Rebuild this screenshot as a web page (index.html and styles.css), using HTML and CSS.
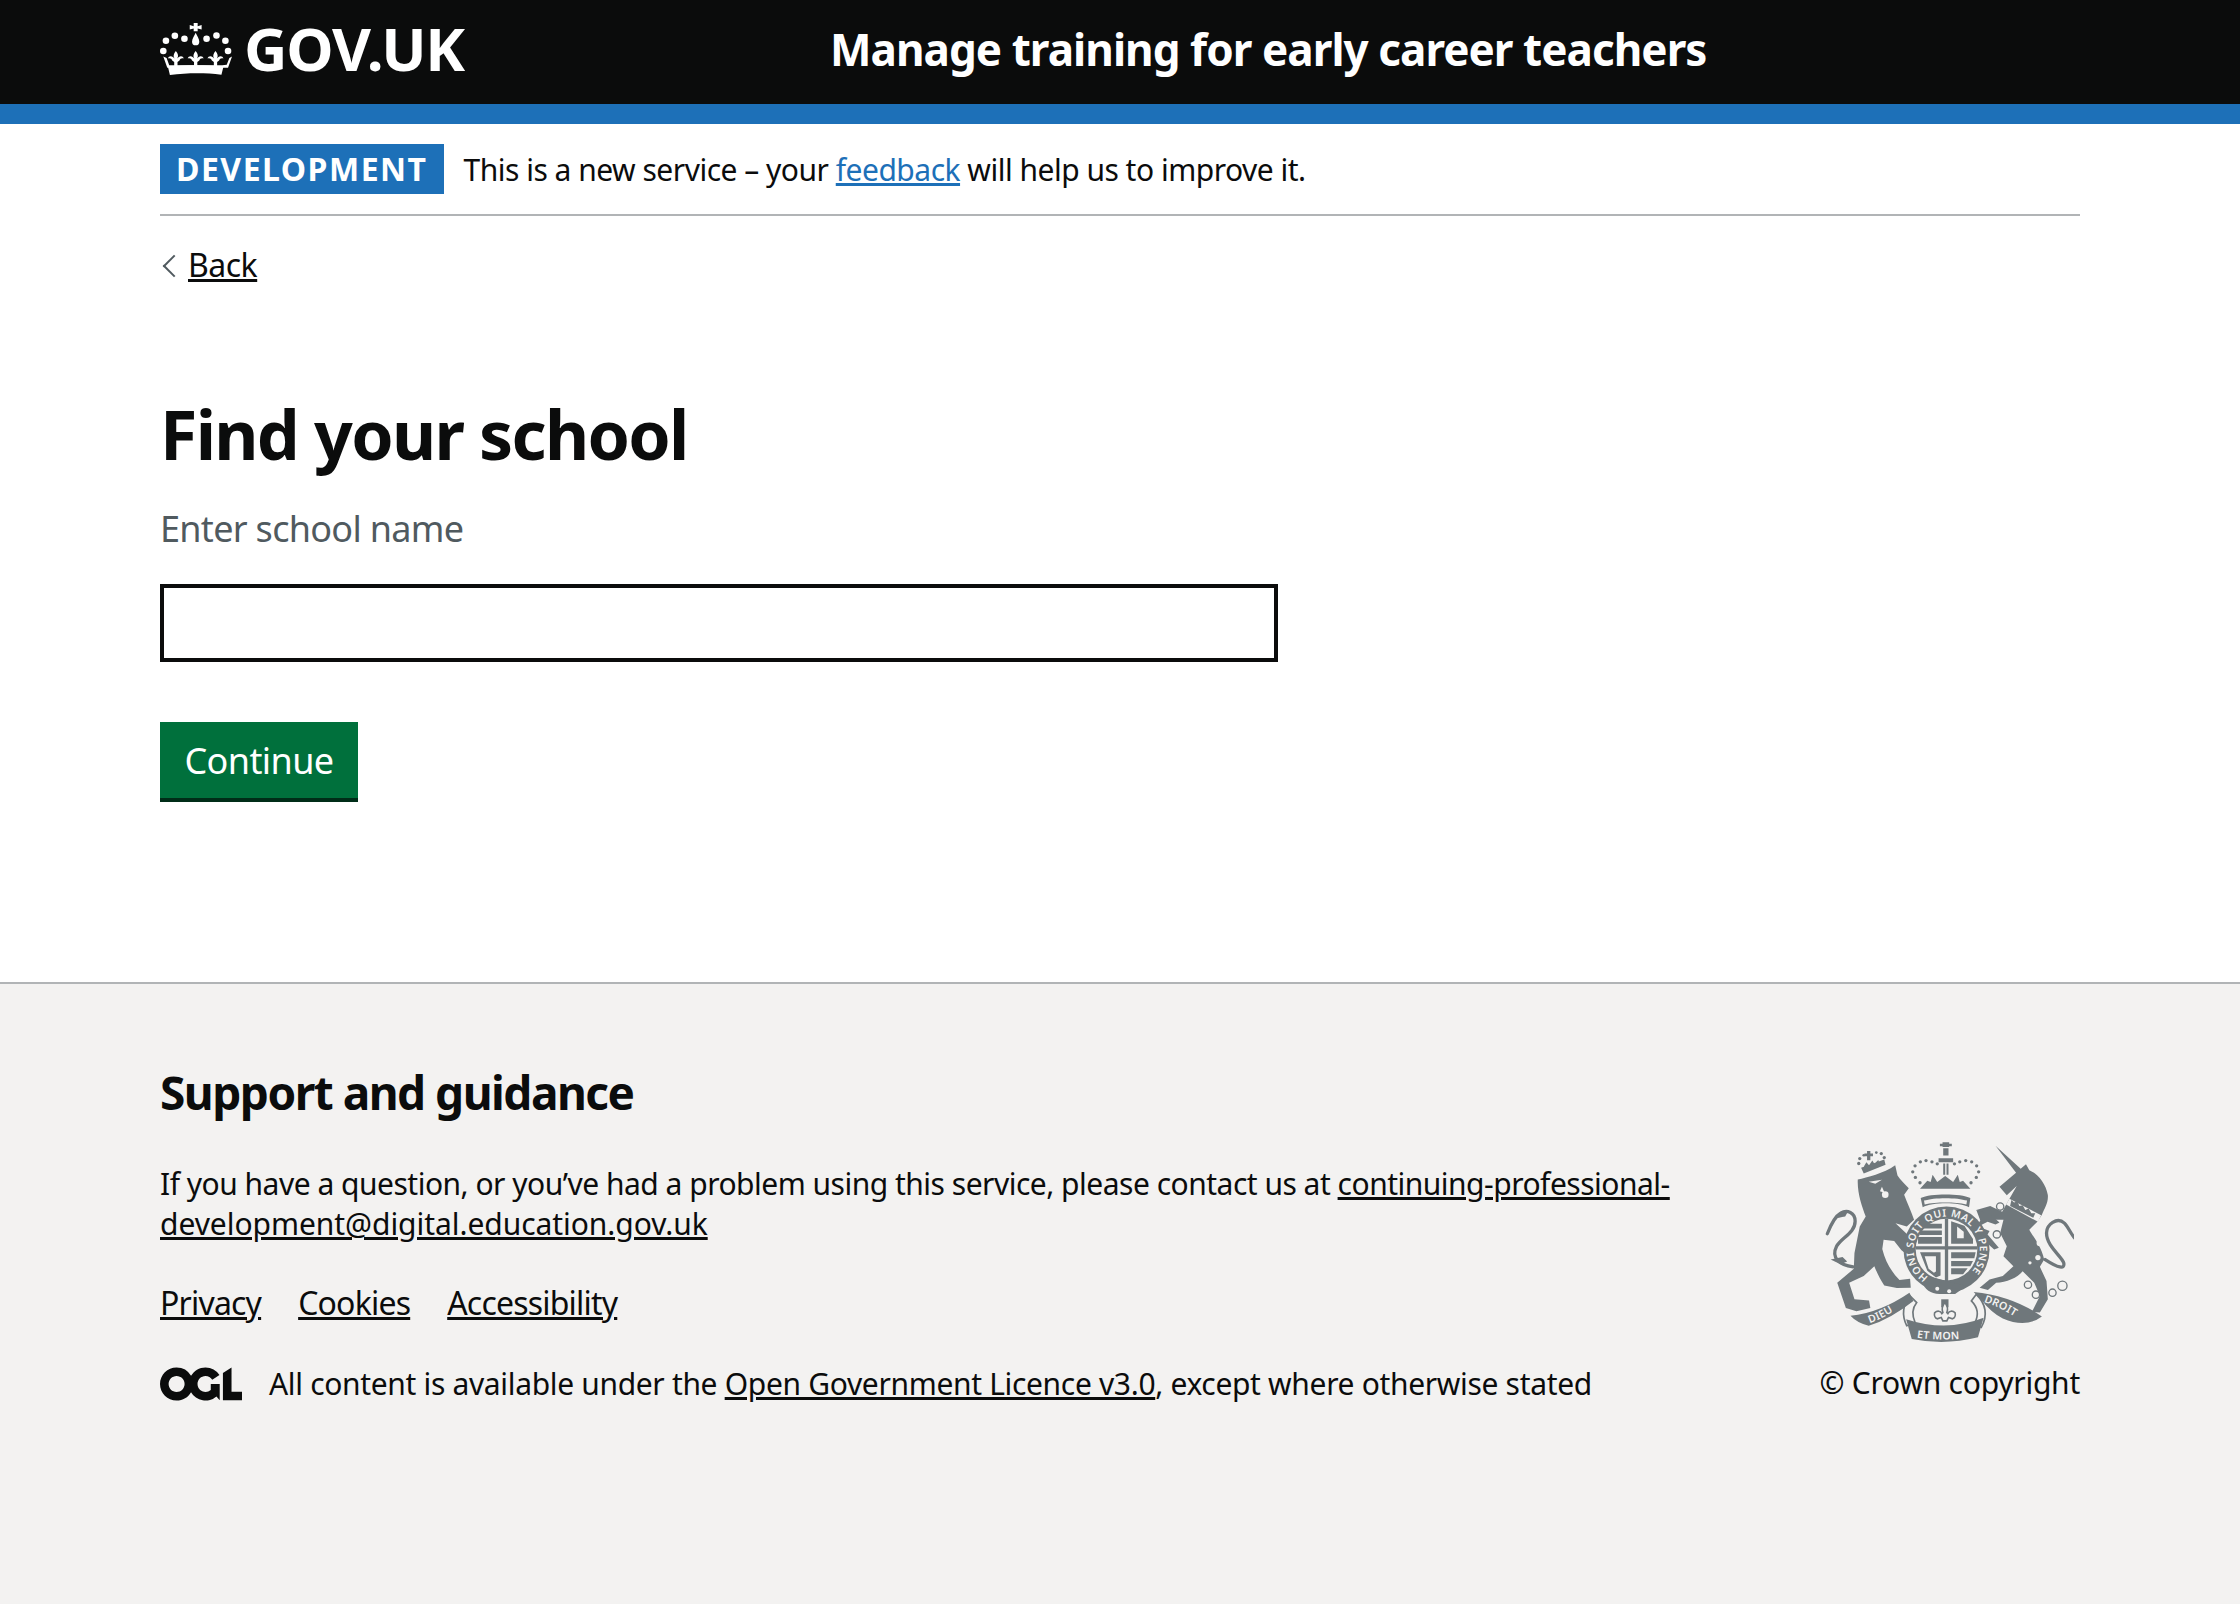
FILE: index.html
```html
<!DOCTYPE html>
<html lang="en">
<head>
<meta charset="utf-8">
<title>Find your school</title>
<link rel="stylesheet" href="styles.css">
</head>
<body>
<header class="site-header">
  <div class="container header-row">
    <a class="logo" href="#">
      <svg class="crown" viewBox="60 68 218 162" aria-hidden="true">
        <defs>
          <path id="fleur" d="M0-26c7 9 9 15 4 23l4-4c7-5 14-3 16 4-6-2-11 0-13 6l-6 4v16H-5V7l-6-4c-2-6-7-8-13-6 2-7 9-9 16-4l4 4C-9-11-7-17 0-26z"/>
        </defs>
        <circle cx="70" cy="155" r="10"/><circle cx="78" cy="124" r="10"/><circle cx="105" cy="109" r="10"/><circle cx="134" cy="118" r="10"/><circle cx="201" cy="118" r="10"/><circle cx="231" cy="108" r="10"/><circle cx="258" cy="124" r="10"/><circle cx="266" cy="155" r="10"/>
        <path d="M162 70h12v10l12-4v14l-12-3v8h-12v-8l-12 3V76l12 4zM168 100c4 10 11 18 11 27a11 11 0 0 1-22 0c0-9 7-17 11-27z"/>
        <use href="#fleur" x="108" y="181"/><use href="#fleur" x="168" y="181"/><use href="#fleur" x="228" y="181"/>
        <path d="M70 172l10 4 8 22 160 0 14-1 8-21 8-4-12 34H82z"/>
        <path d="M84 203c50-6 118-6 168 0l-6 24c-50-6-102-6-156 1z"/>
      </svg>
      <span class="logo-text">GOV.UK</span>
    </a>
    <a class="service-name" href="#">Manage training for early career teachers</a>
  </div>
</header>

<div class="container">
  <div class="phase-banner">
    <strong class="phase-tag">DEVELOPMENT</strong>
    <span class="phase-text">This is a new service – your <a class="blue-link" href="#">feedback</a> will help us to improve it.</span>
  </div>
  <a class="back-link" href="#">Back</a>
  <main class="main">
    <h1 class="title">Find your school</h1>
    <label class="hint" for="school">Enter school name</label>
    <input class="text-input" id="school" type="text">
    <button class="button" type="button">Continue</button>
  </main>
</div>

<footer class="site-footer">
  <div class="container footer-row">
    <div class="footer-main">
      <h2 class="footer-title">Support and guidance</h2>
      <p class="footer-para">If you have a question, or you’ve had a problem using this service, please contact us at <a href="#">continuing-professional-<br><span class="email-end">development@digital.education.gov.uk</span></a></p>
      <ul class="footer-links">
        <li><a href="#">Privacy</a></li>
        <li><a href="#">Cookies</a></li>
        <li><a href="#">Accessibility</a></li>
      </ul>
      <div class="licence">
        <svg class="ogl" viewBox="0 0 483.2 195.7" aria-hidden="true"><path d="M421.5 142.8V.1l-50.7 32.3v161.1h112.4v-50.7zm-122.3-9.6A47.12 47.12 0 0 1 221 97.8c0-26 21.1-47.1 47.1-47.1 16.7 0 31.4 8.7 39.7 21.8l42.7-27.2A97.63 97.63 0 0 0 268.1 0c-36.5 0-68.3 20.1-85.1 49.7A98 98 0 0 0 97.8 0C43.9 0 0 43.9 0 97.8s43.9 97.8 97.8 97.8c36.5 0 68.3-20.1 85.1-49.7a97.76 97.76 0 0 0 149.6 25.4l19.4 22.2V97.8h-52.7l-.01 35.4zM97.8 145c-26 0-47.1-21.1-47.1-47.1s21.1-47.1 47.1-47.1 47.2 21 47.2 47S123.8 145 97.8 145"/></svg>
        <span>All content is available under the <a href="#">Open Government Licence v3.0</a>, except where otherwise stated</span>
      </div>
    </div>
    <div class="footer-crest">
      <svg class="arms" viewBox="70 65 755 610" aria-hidden="true">
        <defs>
          <path id="garter" d="M385 473A100 100 0 1 1 510 462"/>
          <path id="rib-left" d="M208 612Q265 592 322 546"/>
          <path id="rib-mid" d="M350 656Q435 668 525 654"/>
          <path id="rib-right" d="M552 548Q620 570 672 612"/>
        </defs>
        <!-- lion -->
        <path class="arm-line" d="M158 442c-40-6-68-26-50-62 14-26 56-40 56-76 0-26-24-36-44-24-18 10-30 36-40 62"/>
        <path class="arm-fill" d="M100 296c12-16 28-24 44-24l-10 18c-12 2-26 6-34 6zM90 420l30 14 20-8-14-14z"/>
        <path class="arm-fill" d="M172 178C200 172 250 160 285 135L292 166C300 180 315 192 326 205L312 224C322 250 334 275 342 300L320 320 286 310 330 352 352 398 330 412 304 392 282 364 250 360 246 388C255 425 272 455 298 482L330 478 332 505 290 506 252 498C240 480 230 460 222 440L190 470 146 490 162 540 206 544 210 566 168 576 136 566 110 490 160 448 162 400 178 320 196 290C185 260 170 220 172 178Z"/>
        <circle class="arm-pale" cx="255" cy="224" r="10"/>
        <path class="arm-pale" d="M205 185l40-6-20 12zM245 200l8 18-14-4z"/>
        <!-- lion crown -->
        <path class="arm-fill" d="M182 143L252 118 256 134 190 160ZM190 140l8-14 8 9 10-14 6 10 12-12 4 12 14-4 0 8-56 20zM200 92h10v8h8v8h-8v12h-10v-12h-8v-8h8z"/>
        <g class="arm-fill">
          <circle cx="175" cy="130" r="5"/><circle cx="178" cy="115" r="5"/><circle cx="190" cy="105" r="4"/><circle cx="228" cy="97" r="4"/><circle cx="243" cy="100" r="5"/><circle cx="252" cy="112" r="5"/>
        </g>
        <!-- unicorn -->
        <path class="arm-line" d="M738 420c40 26 60 30 56 10-6-20-52-50-52-90 0-26 32-50 54-30 12 12 20 34 32 46"/>
        <path class="arm-fill" d="M588 76L664 146 680 132 690 150C715 160 740 190 746 225 748 250 735 265 728 285L715 305 690 330C700 350 725 375 735 420L722 442 742 485 746 540 722 580 698 578 722 530 705 490 670 455C655 475 620 488 590 490L565 512 540 505 570 480 610 470 642 440 612 410 622 380 602 340 612 300 580 300 530 270 572 258 608 276 628 240 652 198 622 226 600 200 650 158Z"/>
        <path class="arm-pale" d="M630 236l96 50-10 20-96-52z"/>
        <path class="arm-fill" d="M636 240l8 8 10-4 6 14 10-2 8 14 10-4 8 14 12 0-6 14-70-36z"/>
        <circle class="arm-pale" cx="722" cy="370" r="10"/><circle class="arm-pale" cx="716" cy="414" r="8"/><circle class="arm-pale" cx="692" cy="430" r="5"/>
        <g class="chain">
          <circle cx="602" cy="260" r="11"/><circle cx="592" cy="344" r="11"/><circle cx="686" cy="496" r="11"/><circle cx="710" cy="526" r="11"/><circle cx="760" cy="520" r="11"/><circle cx="790" cy="499" r="14"/>
        </g>
        <path class="arm-fill" d="M530 270l40 12 30 26-12 6-24-8-28 14 34 14-6 10 34 40-14 6-40-36-22-18 20-34z"/>
        <!-- royal crown -->
        <path class="arm-fill" d="M428 66h20v14h-20zM420 70h36v8h-36zM430 84h16v22h-16zM416 114h44v12h-44zM430 130h6v34h-6zM440 130h6v34h-6z"/>
        <path class="arm-fill" d="M360 206l22-24 10 4 6-22 14 22 8-6 16-12 16 12 8 6 14-22 6 22 10-4 22 24z"/>
        <path class="arm-fill" d="M362 234c30-14 120-14 150 0l-4 28c-30-16-110-16-140 0z"/>
        <path class="arm-pale" d="M372 242c30-10 100-10 130 0l-2 12c-34-8-92-8-126 0z"/>
        <g class="arm-fill">
          <circle cx="360" cy="188" r="5"/><circle cx="346" cy="172" r="5"/><circle cx="338" cy="155" r="5"/><circle cx="345" cy="137" r="5"/><circle cx="361" cy="125" r="5"/><circle cx="378" cy="121" r="5"/><circle cx="396" cy="125" r="5"/><circle cx="412" cy="131" r="5"/>
          <circle cx="514" cy="188" r="5"/><circle cx="530" cy="172" r="5"/><circle cx="537" cy="155" r="5"/><circle cx="531" cy="137" r="5"/><circle cx="516" cy="125" r="5"/><circle cx="498" cy="121" r="5"/><circle cx="480" cy="125" r="5"/><circle cx="464" cy="131" r="5"/>
        </g>
        <!-- garter and shield -->
        <circle class="arm-fill" cx="440" cy="390" r="130"/>
        <circle class="arm-pale" cx="440" cy="390" r="93"/>
        <path class="arm-fill" d="M435 297h10v188h-10zM347 380h186v10H347z"/>
        <path class="arm-fill" d="M372 312h54v14h-54zM360 332h66v14h-66zM354 352h72v20h-72zM454 304l40 14 26 40v14h-66zM454 398h74l-4 18h-70zM454 424h66l-8 16h-58zM454 446h50l-14 18h-36zM360 398h62v70l-14 6-26-20z"/>
        <path class="arm-pale" d="M472 320l20 16v20h-20zM374 410h34v46l-6 4-16-12z"/>
        <text class="garter-text"><textPath href="#garter">HONI SOIT QUI MAL Y PENSE</textPath></text>
        <path class="arm-fill" d="M366 488l34-14 100 26-34 24h-48c-26 0-44-14-52-36z"/>
        <circle class="arm-pale" cx="412" cy="508" r="6"/><circle class="arm-pale" cx="448" cy="516" r="6"/>
        <!-- motto -->
        <path class="ribbon-fold" d="M330 530Q296 572 320 620L345 610Q330 575 350 550Z"/>
        <path class="ribbon-fold" d="M530 525Q575 570 545 625L525 612Q545 575 515 545Z"/>
        <path class="arm-fill" d="M150 590Q240 580 328 520L340 545Q270 600 205 620Q170 612 150 590Z"/>
        <path class="arm-fill" d="M318 600Q440 640 552 596L535 655Q435 680 335 660Z"/>
        <path class="arm-fill" d="M522 518Q640 530 728 592Q680 628 610 598Q575 580 548 545Z"/>
        <path class="arm-fill" d="M424 540h22v24h-22z"/>
        <path class="ribbon-fold" d="M435 550c8 10 11 18 6 30l3 3c4-8 14-10 22-2 2 8-2 16-8 18l-12-4-5 10h-12l-5-10-12 4c-6-2-10-10-8-18 8-8 18-6 22 2l3-3c-5-12-2-20 6-30z"/>
        <text class="motto-text"><textPath href="#rib-left">DIEU</textPath></text>
        <text class="motto-text"><textPath href="#rib-mid">ET MON</textPath></text>
        <text class="motto-text"><textPath href="#rib-right">DROIT</textPath></text>
      </svg>
      <span class="copyright">© Crown copyright</span>
    </div>
  </div>
</footer>
</body>
</html>
```
FILE: styles.css
```css
* { box-sizing: border-box; }
html, body { margin: 0; padding: 0; }
body {
  font-family: "Noto Sans", "Liberation Sans", sans-serif;
  color: #0b0c0c;
  background: #fff;
  height: 1604px;
  display: flex;
  flex-direction: column;
}
a { color: inherit; }
.container { margin: 0 160px; }

.site-header {
  background: #0b0c0c;
  height: 124px;
  border-bottom: 20px solid #1d70b8;
  flex: none;
}
.header-row { display: flex; align-items: center; height: 104px; padding-bottom: 6px; }
.logo {
  display: flex;
  align-items: center;
  width: 670px;
  color: #fff;
  text-decoration: none;
}
.crown { width: 72px; height: 54px; fill: #fff; margin-right: 12px; }
.logo-text { font-size: 60px; font-weight: 700; letter-spacing: -1.2px; line-height: 1; margin-top: -2px; }
.service-name {
  color: #fff;
  text-decoration: none;
  font-size: 44px;
  font-weight: 700;
  letter-spacing: -0.95px;
  line-height: 1;
}

.phase-banner {
  display: flex;
  align-items: center;
  gap: 20px;
  padding: 20px 0;
  border-bottom: 2px solid #b1b4b6;
}
.phase-tag {
  background: #1d70b8;
  color: #fff;
  font-size: 32px;
  font-weight: 700;
  letter-spacing: 1.5px;
  line-height: 50px;
  height: 50px;
  padding: 0 16px;
}
.phase-text { font-size: 30px; letter-spacing: -0.5px; line-height: 40px; padding-top: 1px; }
.blue-link { color: #1d70b8; }

.back-link {
  display: inline-block;
  position: relative;
  margin-top: 29px;
  padding-left: 28px;
  font-size: 32px;
  line-height: 40px;
  letter-spacing: -0.5px;
}
.back-link::before {
  content: "";
  position: absolute;
  left: 6px;
  top: 13px;
  width: 14px;
  height: 14px;
  border-left: 2px solid #505a5f;
  border-bottom: 2px solid #505a5f;
  transform: rotate(45deg);
}

.main { padding-top: 109px; display: flex; flex-direction: column; align-items: flex-start; }
.title { margin: 0 0 30px; font-size: 68px; line-height: 80px; font-weight: 700; letter-spacing: -1.7px; }
.hint { color: #505a5f; font-size: 36px; line-height: 50px; letter-spacing: -0.7px; margin-bottom: 30px; }
.text-input {
  display: block;
  width: 1118px;
  height: 78px;
  border: 4px solid #0b0c0c;
  background: #fff;
  border-radius: 0;
  margin: 0 0 60px;
}
.button {
  width: 198px;
  height: 80px;
  padding: 0 0 2px;
  border: 0;
  background: #00703c;
  box-shadow: inset 0 -4px 0 #002d18;
  color: #fff;
  font-family: inherit;
  font-size: 36px;
  letter-spacing: -0.6px;
  line-height: 1;
}

.site-footer {
  flex: 1;
  margin-top: 180px;
  background: #f3f2f1;
  border-top: 2px solid #b1b4b6;
  padding-top: 78px;
}
.footer-row { display: flex; justify-content: space-between; align-items: flex-start; }
.footer-main { width: 1620px; }
.footer-title { margin: 0 0 42px; font-size: 46px; line-height: 60px; font-weight: 700; letter-spacing: -1.5px; }
.footer-para { margin: 0 0 39px; font-size: 30px; line-height: 40px; letter-spacing: -0.5px; }
.email-end { letter-spacing: -0.05px; }
.footer-links {
  list-style: none;
  margin: 0 0 41px;
  padding: 0;
  display: flex;
  gap: 37px;
  font-size: 32px;
  line-height: 40px;
  letter-spacing: -0.8px;
}
.licence {
  display: flex;
  align-items: center;
  gap: 27px;
  font-size: 30px;
  line-height: 40px;
  letter-spacing: -0.33px;
}
.ogl { width: 82px; height: 34px; fill: #0b0c0c; flex: none; }
.footer-crest {
  display: flex;
  flex-direction: column;
  align-items: flex-end;
  padding-top: 80px;
}
.arms { width: 250px; height: 202px; margin: 0 6px 19px 0; display: block; }
.arm-fill { fill: #6f777b; }
.arm-pale { fill: #f3f2f1; }
.arm-line { fill: none; stroke: #6f777b; stroke-width: 10; stroke-linecap: round; }
.ribbon-fold { fill: #f3f2f1; stroke: #6f777b; stroke-width: 5; }
.chain { fill: #f3f2f1; stroke: #6f777b; stroke-width: 4; }
.garter-text { fill: #f3f2f1; font-family: "Noto Sans", sans-serif; font-size: 31px; font-weight: 600; letter-spacing: 2px; }
.motto-text { fill: #f3f2f1; font-family: "Noto Sans", sans-serif; font-size: 32px; font-weight: 600; letter-spacing: 1px; }
.copyright { font-size: 30px; line-height: 40px; letter-spacing: -0.25px; }
```
